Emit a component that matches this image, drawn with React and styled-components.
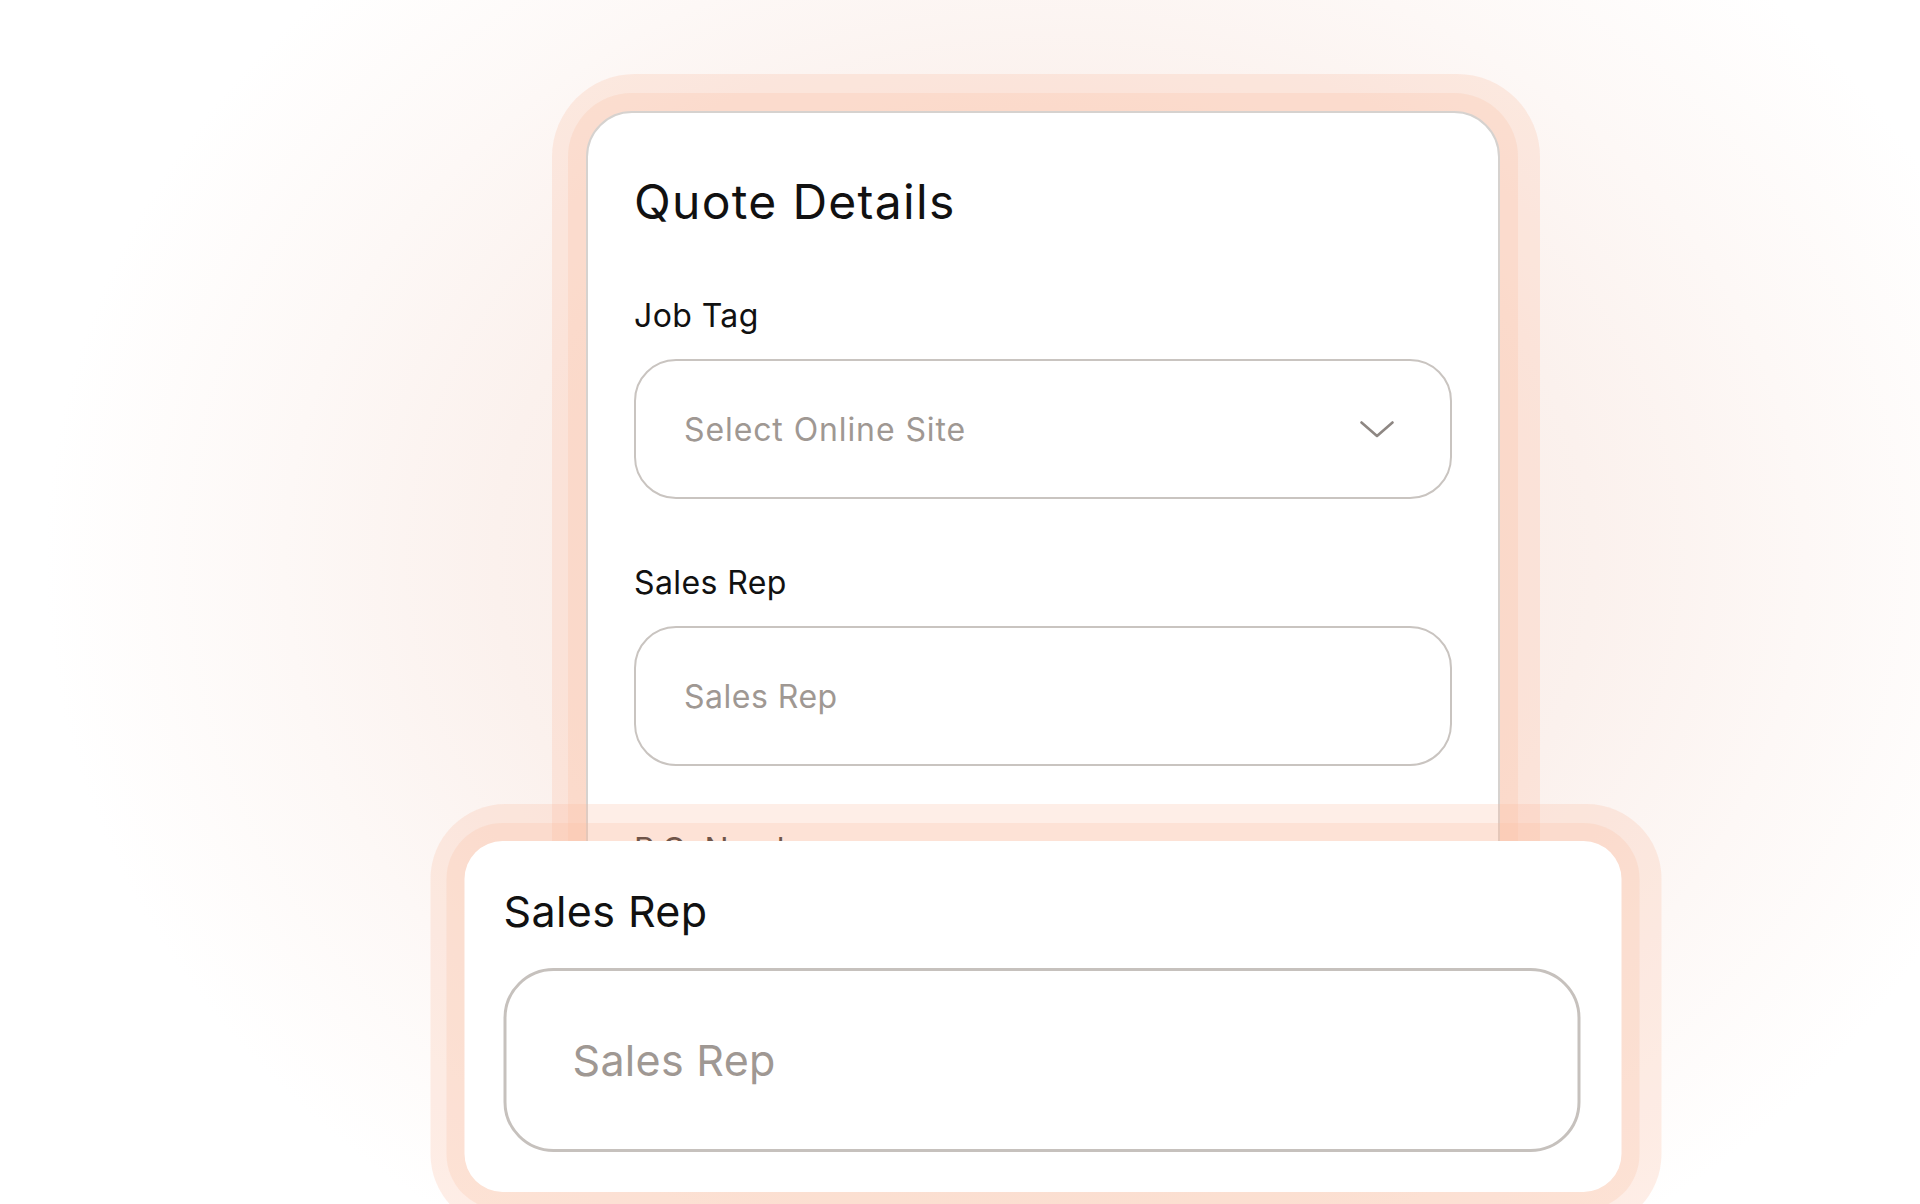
import styled, { createGlobalStyle } from "styled-components";

const GlobalStyle = createGlobalStyle`
  html, body {
    margin: 0;
    padding: 0;
  }

  body {
    font-family: Inter, "Noto Sans", sans-serif;
    background: #ffffff;
    color: #111111;
  }

  * {
    box-sizing: border-box;
  }
`;

// peach halo used around both cards
const halo = `
  box-shadow:
    0 0 0 18px rgba(250, 186, 156, 0.22),
    3px 0 0 37px rgba(250, 186, 156, 0.24);
`;

function Chevron() {
  return (
    <svg width="34" height="17" viewBox="0 0 34 17" fill="none">
      <polyline
        points="1.5,1.5 17,15 32.5,1.5"
        stroke="#8e8783"
        strokeWidth="2.6"
        strokeLinecap="round"
        strokeLinejoin="round"
      />
    </svg>
  );
}

export default function App() {
  return (
    <>
      <GlobalStyle />
      <Page>
        <Stage>
          <Card>
            <Title>Quote Details</Title>

            <Form>
              <Field>
                <Label>Job Tag</Label>
                <Select type="button">
                  <SelectText>Select Online Site</SelectText>
                  <Chevron />
                </Select>
              </Field>

              <Field>
                <Label>Sales Rep</Label>
                <Input type="text" placeholder="Sales Rep" />
              </Field>

              <Field>
                <Label>P.O. Number</Label>
                <Input type="text" placeholder="P.O. Number" />
              </Field>
            </Form>
          </Card>

          <Callout>
            <CalloutLabel>Sales Rep</CalloutLabel>
            <CalloutInput type="text" placeholder="Sales Rep" />
          </Callout>
        </Stage>
      </Page>
    </>
  );
}

const Page = styled.main`
  width: 1920px;
  height: 1204px;
  overflow: hidden;
  display: flex;
  justify-content: center;
  padding: 111px 0 0 166px;
  background: radial-gradient(
    ellipse 1000px 820px at 1045px 560px,
    #f9eae3 0%,
    #faeee9 40%,
    #fbf1ed 55%,
    #fdf8f6 76%,
    #ffffff 100%
  );
`;

const Stage = styled.div`
  position: relative;
  width: 914px;
  flex-shrink: 0;
`;

const Card = styled.section`
  width: 914px;
  height: 1000px;
  background: #ffffff;
  border: 2px solid #d6d2cf;
  border-radius: 46px;
  padding: 60px 46px;
  display: flex;
  flex-direction: column;
  ${halo}
`;

const Title = styled.h1`
  margin: 0 0 65px;
  font-size: 48px;
  line-height: 58px;
  font-weight: 400;
  letter-spacing: 1.3px;
  color: #111111;
`;

const Form = styled.div`
  display: flex;
  flex-direction: column;
  gap: 64px;
`;

const Field = styled.div`
  display: flex;
  flex-direction: column;
  gap: 24px;
`;

const Label = styled.label`
  font-size: 32px;
  line-height: 39px;
  font-weight: 400;
  letter-spacing: 0.4px;
  color: #111111;
`;

const Select = styled.button`
  width: 100%;
  height: 140px;
  display: flex;
  align-items: center;
  justify-content: space-between;
  padding: 0 56px 0 48px;
  background: #ffffff;
  border: 2px solid #c9c4c0;
  border-radius: 42px;
  font-family: inherit;
  cursor: pointer;
`;

const SelectText = styled.span`
  font-size: 32px;
  letter-spacing: 0.9px;
  color: #9f9893;
`;

const Input = styled.input`
  width: 100%;
  height: 140px;
  padding: 0 48px;
  background: #ffffff;
  border: 2px solid #c9c4c0;
  border-radius: 42px;
  font-family: inherit;
  font-size: 32px;
  letter-spacing: 0.5px;
  color: #111111;
  outline: none;

  &::placeholder {
    color: #9f9893;
  }
`;

const Callout = styled.div`
  position: absolute;
  top: 730px;
  left: 50%;
  transform: translateX(-50%);
  width: 1157px;
  background: #ffffff;
  border-radius: 38px;
  padding: 44px 41px 40px 39px;
  display: flex;
  flex-direction: column;
  gap: 31px;
  ${halo}
`;

const CalloutLabel = styled.label`
  font-size: 43px;
  line-height: 52px;
  letter-spacing: 0.4px;
  color: #111111;
`;

const CalloutInput = styled.input`
  width: 100%;
  height: 184px;
  padding: 0 66px;
  background: #ffffff;
  border: 3px solid #c6c1bd;
  border-radius: 50px;
  font-family: inherit;
  font-size: 43px;
  letter-spacing: 0.3px;
  color: #111111;
  outline: none;

  &::placeholder {
    color: #9f9893;
  }
`;
